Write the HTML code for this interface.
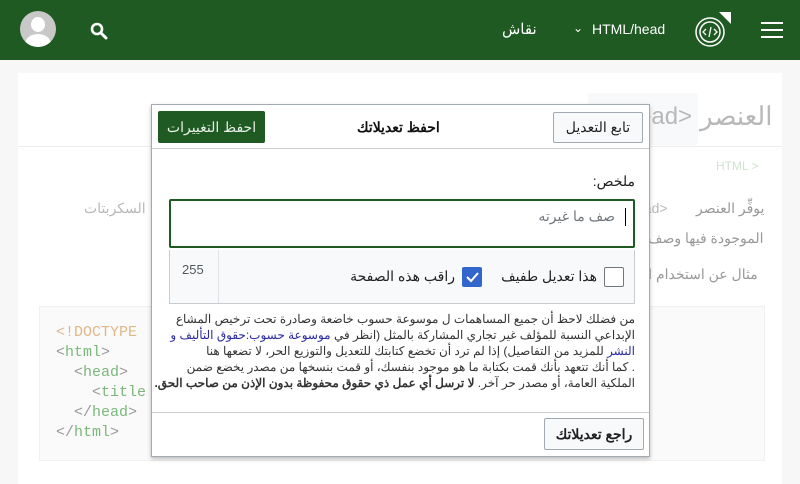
<!DOCTYPE html>
<html style="width:800px;height:484px;overflow:hidden"><head><meta charset="utf-8">
<style>
*{box-sizing:border-box;margin:0;padding:0}
body{width:800px;height:484px;overflow:hidden;background:#f7f7f7;font-family:"Liberation Sans","Noto Sans CJK SC",sans-serif;position:relative}
.hdr{position:absolute;left:0;top:0;width:800px;height:60px;background:#1f5a22;color:#fff}
.abs{position:absolute}
.panel{position:absolute;left:18px;top:73px;width:764px;height:411px;background:#fff;overflow:hidden}
.faint{color:#b8b8b8}
.dlg{position:absolute;left:151px;top:104px;width:499px;height:353px;background:#fff;border:1px solid #a2a9b1;box-shadow:0 2px 4px rgba(0,0,0,.25)}
.btn{position:absolute;border:1px solid #a2a9b1;border-radius:2px;background:#f8f9fa;font-size:14px;font-weight:bold;color:#202122;text-align:center}
.ln{white-space:nowrap;height:16px}
</style></head><body>
<div class="hdr">
  <div class="abs" style="left:20px;top:11px;width:36px;height:36px;border-radius:50%;background:#c8c8c8;overflow:hidden">
    <div class="abs" style="left:11px;top:6px;width:14px;height:15px;border-radius:50%;background:#fff"></div>
    <div class="abs" style="left:5px;top:23px;width:26px;height:20px;border-radius:50%;background:#fff"></div>
  </div>
  <svg class="abs" style="left:90px;top:22px" width="18" height="18" viewBox="0 0 18 18"><circle cx="7" cy="7" r="5" fill="none" stroke="#fff" stroke-width="2.6"/><path d="M11 11l5 5" stroke="#fff" stroke-width="3" stroke-linecap="round"/></svg>
  <div class="abs" style="left:502px;top:20px;font-size:15px">نقاش</div>
  <div class="abs" style="left:573px;top:21px;font-size:12px">⌄</div>
  <div class="abs" style="left:592px;top:21px;font-size:14px">HTML/head</div>
  <svg class="abs" style="left:693px;top:11px" width="40" height="40" viewBox="0 0 40 40"><circle cx="17" cy="21" r="14" fill="none" stroke="#fff" stroke-width="1.5"/><circle cx="17" cy="21" r="10" fill="none" stroke="#fff" stroke-width="1.5"/><path d="M13 18l-3 3 3 3M21 18l3 3-3 3M18 16l-2 10" stroke="#fff" stroke-width="1.3" fill="none"/><path d="M26 1h12v12z" fill="#fff"/></svg>
  <div class="abs" style="left:761px;top:22px;width:22px;height:2px;background:#fff;box-shadow:0 7px 0 #fff,0 14px 0 #fff"></div>
</div>
<div class="panel">
  <div class="abs" style="left:0;top:73px;width:764px;height:1px;background:#eaecf0"></div>
  <div class="abs" style="left:570px;top:20px;width:110px;height:52px;background:#f8f9fa;border-radius:2px"></div>
  <div class="abs faint" style="left:620px;top:30px;font-size:24px">ead&gt;</div>
  <div class="abs faint" style="left:682px;top:28px;font-size:26px">العنصر</div>
  <div class="abs" style="left:698px;top:86px;font-size:12px;color:#cfe3cf">HTML &gt;</div>
  <div class="abs faint" style="left:618px;top:127px;font-size:14px">ead&gt;</div>
  <div class="abs" style="left:678px;top:127px;font-size:14px;color:#999">يوفِّر العنصر</div>
  <div class="abs faint" style="left:66px;top:127px;font-size:14px">السكربتات</div>
  <div class="abs" style="left:630px;top:157px;font-size:14px;color:#999">الموجودة فيها وصف</div>
  <div class="abs" style="left:620px;top:193px;font-size:14px;color:#999">مثال عن استخدام ال</div>
  <div class="abs" style="left:21px;top:233px;width:726px;height:155px;background:#fafafa;border:1px solid #f0f0f0"></div>
  <div class="abs" style="left:38px;top:250px;font-family:'Liberation Mono',monospace;font-size:15px;line-height:20px;color:#999;white-space:pre"><span style="color:#e0b888">&lt;!DOCTYPE</span>
&lt;<span style="color:#7ab87a">html</span>&gt;
  &lt;<span style="color:#7ab87a">head</span>&gt;
    &lt;<span style="color:#7ab87a">title</span>
  &lt;/<span style="color:#7ab87a">head</span>&gt;
&lt;/<span style="color:#7ab87a">html</span>&gt;</div>
</div>
<div class="dlg">
  <div class="abs" style="left:6px;top:6px;width:107px;height:32px;background:#1f5a22;border-radius:2px;color:#e8f0e8;font-size:14px;text-align:center;line-height:32px">احفظ التغييرات</div>
  <div class="abs" style="left:205px;top:14px;font-size:14px;font-weight:bold;color:#111">احفظ تعديلاتك</div>
  <div class="btn" style="left:401px;top:7px;width:90px;height:31px;line-height:29px;font-weight:normal">تابع التعديل</div>
  <div class="abs" style="left:0;top:43px;width:497px;height:1px;background:#c8ccd1"></div>
  <div class="abs" style="right:14px;top:68px;font-size:14px;color:#202122;direction:rtl">ملخص:</div>
  <div class="abs" style="left:17px;top:94px;width:466px;height:49px;border:2px solid #1f5a22;border-radius:2px"></div>
  <div class="abs" style="right:34px;top:103px;font-size:14px;color:#72777d;direction:rtl">صف ما غيرته</div>
  <div class="abs" style="left:473px;top:103px;width:1px;height:18px;background:#000"></div>
  <div class="abs" style="left:17px;top:145px;width:466px;height:54px;background:#f8f9fa;border:1px solid #c8ccd1;border-top:none"></div>
  <div class="abs" style="left:66px;top:145px;width:1px;height:53px;background:#e0e3e6"></div>
  <div class="abs" style="left:30px;top:157px;font-size:13px;color:#54595d">255</div>
  <div class="abs" style="right:52px;top:163px;font-size:14px;color:#202122;direction:rtl;white-space:nowrap">هذا تعديل طفيف</div>
  <div class="abs" style="left:452px;top:162px;width:20px;height:20px;border:1px solid #72777d;border-radius:2px;background:#fff"></div>
  <div class="abs" style="left:310px;top:162px;width:20px;height:20px;border-radius:2px;background:#36c"><svg width="20" height="20"><path d="M5 10l4 4 7-8" stroke="#fff" stroke-width="2" fill="none"/></svg></div>
  <div class="abs" style="right:194px;top:163px;font-size:14px;color:#202122;direction:rtl;white-space:nowrap">راقب هذه الصفحة</div>
  <div class="abs" style="right:14px;top:206px;font-size:12px;line-height:16px;color:#333;direction:rtl;text-align:right">
    <div class="ln">من فضلك لاحظ أن جميع المساهمات ل موسوعة حسوب خاضعة وصادرة تحت ترخيص المشاع</div>
    <div class="ln">الإبداعي النسبة للمؤلف غير تجاري المشاركة بالمثل (انظر في <span style="color:#2a2aa0">موسوعة حسوب:حقوق التأليف و</span></div>
    <div class="ln"><span style="color:#2a2aa0">النشر</span> للمزيد من التفاصيل) إذا لم ترد أن تخضع كتابتك للتعديل والتوزيع الحر، لا تضعها هنا</div>
    <div class="ln">. كما أنك تتعهد بأنك قمت بكتابة ما هو موجود بنفسك، أو قمت بنسخها من مصدر يخضع ضمن</div>
    <div class="ln">الملكية العامة، أو مصدر حر آخر. <b>لا ترسل أي عمل ذي حقوق محفوظة بدون الإذن من صاحب الحق.</b></div>
  </div>
  <div class="abs" style="left:0;top:307px;width:497px;height:1px;background:#c8ccd1"></div>
  <div class="btn" style="left:392px;top:313px;width:100px;height:32px;line-height:30px">راجع تعديلاتك</div>
</div>
</body></html>
